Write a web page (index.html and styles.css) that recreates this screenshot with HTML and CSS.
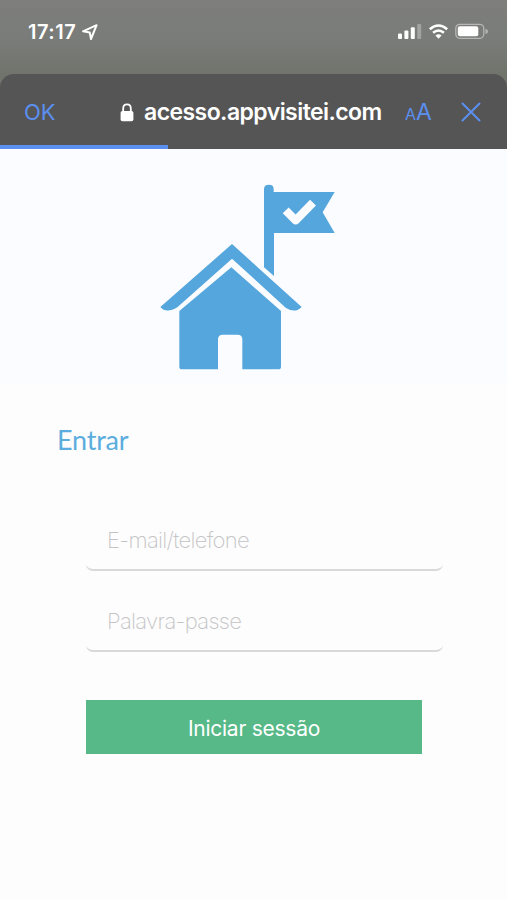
FILE: index.html
```
<!DOCTYPE html>
<html lang="pt">
<head>
    <meta charset="UTF-8">
    <meta name="viewport" content="width=device-width, initial-scale=1.0">
    <title>Visitei - Entrar</title>
    <link rel="stylesheet" href="styles.css">
</head>
<body>
    <!-- Status bar -->
    <div class="status-bar">
        <span class="time">17:17</span>
        <svg class="location" width="18" height="18" viewBox="0 0 18 18">
            <path d="M2 8.3 L15.6 2.2 L10 16 L8.7 9.5 Z" fill="none" stroke="#fff" stroke-width="2" stroke-linejoin="round"/>
        </svg>
        <div class="status-icons">
            <svg width="24" height="17" viewBox="0 0 24 17" fill="#fff">
                <rect x="0" y="10.5" width="4" height="5.5" rx="1"/>
                <rect x="6.4" y="7.5" width="4" height="8.5" rx="1"/>
                <rect x="12.8" y="4.2" width="4" height="11.8" rx="1"/>
                <rect x="19.2" y="1" width="4" height="15" rx="1" opacity="0.3"/>
            </svg>
            <svg width="21" height="17" viewBox="0 0 22 17" fill="none" stroke="#fff" stroke-width="2.6">
                <path d="M1.9 6.1 Q11 -1.8 20.1 6.1"/>
                <path d="M5.3 9.8 Q11 5 16.7 9.8"/>
                <path d="M11 16 L7.8 12.8 Q11 10.2 14.2 12.8 Z" fill="#fff" stroke="none"/>
            </svg>
            <svg width="34" height="17" viewBox="0 0 34 17">
                <rect x="0.8" y="1.3" width="28" height="14" rx="4" fill="none" stroke="#fff" stroke-opacity="0.45" stroke-width="1.3"/>
                <rect x="2.8" y="3.3" width="20.5" height="10" rx="2" fill="#fff"/>
                <path d="M30.5 5.8 Q33 6.4 33 8.4 Q33 10.4 30.5 11 Z" fill="#fff" opacity="0.45"/>
            </svg>
        </div>
    </div>

    <!-- Browser bar -->
    <div class="browser-bar">
        <span class="ok">OK</span>
        <svg class="lock" width="14" height="19" viewBox="0 0 14 19">
            <path d="M3.2 9 V5.4 Q3.2 1.4 7 1.4 Q10.8 1.4 10.8 5.4 V9" fill="none" stroke="#fff" stroke-width="1.8"/>
            <rect x="0.6" y="8" width="12.8" height="10.2" rx="1.8" fill="#fff"/>
        </svg>
        <span class="address">acesso.appvisitei.com</span>
        <span class="text-size"><small>A</small>A</span>
        <svg class="close" width="20" height="20" viewBox="0 0 20 20">
            <path d="M1.5 1.5 L18.5 18.5 M18.5 1.5 L1.5 18.5" stroke="#5b8ff0" stroke-width="2" stroke-linecap="round"/>
        </svg>
        <div class="progress"></div>
    </div>

    <div class="logo">
        <svg width="200" height="213" viewBox="0 0 600 639" fill="#54a6dd">
            <path d="M342 57 Q342 44 357 44 Q371 44 371 57 V66 H554 L518 127 L554 189 H372 V318 L342 292 Z"/>
            <path d="M407 121 L437 151 L489 98" fill="none" stroke="#fafcff" stroke-width="25" stroke-linejoin="round"/>
            <path d="M246 222 L455 411 Q436 431 408 414 L246 266 L82 412 Q48 432 31 411 Z"/>
            <path d="M244 292 L393 423 V590 Q393 598 385 598 H277 V508 Q277 494 263 494 H218 Q204 494 204 508 V598 H96 Q88 598 88 590 V423 Z"/>
        </svg>
    </div>

    <div class="login">
        <h1>Entrar</h1>
        <form>
            <input type="text" placeholder="E-mail/telefone">
            <input type="password" placeholder="Palavra-passe">
            <button type="button">Iniciar sessão</button>
        </form>
    </div>
</body>
</html>
```
FILE: styles.css
```
* {
    box-sizing: border-box;
}
body {
    margin: 0;
    min-height: 900px;
    font-family: Inter, "Liberation Sans", sans-serif;
    background: #fdfdfd linear-gradient(#7e7e7c, #797c79 40px, #71746c 74px, #71746c 90px, transparent 90px) no-repeat;
}
.status-bar {
    display: flex;
    height: 74px;
    padding: 23px 18px 0 28px;
    color: #fff;
}
.time {
    width: 53px;
    font-size: 20px;
    font-weight: 600;
    line-height: 19px;
    letter-spacing: 0.5px;
}
.status-icons {
    display: flex;
    gap: 6px;
    margin-left: auto;
}
.browser-bar {
    position: relative;
    display: flex;
    align-items: center;
    height: 75px;
    padding: 1px 26px 0 24px;
    color: #fff;
    background-color: #555;
    border-radius: 14px 14px 0 0;
}
.ok {
    width: 96px;
    font-size: 22px;
    color: #5b8ff0;
}
.lock {
    margin-right: 10px;
}
.address {
    width: 261px;
    font-size: 23px;
    font-weight: 600;
    letter-spacing: -0.56px;
}
.text-size {
    width: 56px;
    font-size: 23px;
    color: #5b8ff0;
}
.text-size small {
    font-size: 16px;
}
.progress {
    position: absolute;
    left: 0;
    bottom: 0;
    width: 168px;
    height: 4px;
    background-color: #5b8ff0;
}
.logo {
    height: 234px;
    padding: 21px 0 0 150px;
    background-color: #fafcff;
}
.login {
    padding: 41px 64px 0 57px;
}
h1 {
    margin: 0;
    font-family: Lato, sans-serif;
    font-size: 27px;
    font-weight: 400;
    line-height: 32px;
    letter-spacing: -0.2px;
    color: #5badde;
}
form {
    padding: 53px 0 0 29px;
}
input {
    display: block;
    width: 357px;
    height: 62px;
    margin-bottom: 19px;
    padding: 2px 21px 0;
    border: 0 solid transparent;
    border-bottom: 2px solid #d9d9db;
    border-radius: 7px;
    background: none;
    font-family: inherit;
    font-size: 22px;
    font-weight: 200;
    letter-spacing: -0.67px;
}
input::placeholder {
    color: #c4c4c6;
}
button {
    width: 336px;
    height: 54px;
    margin-top: 29px;
    padding: 2px 0 0;
    border: none;
    background-color: #56b987;
    color: #fff;
    font-family: inherit;
    font-size: 21px;
    letter-spacing: -0.25px;
}
```
